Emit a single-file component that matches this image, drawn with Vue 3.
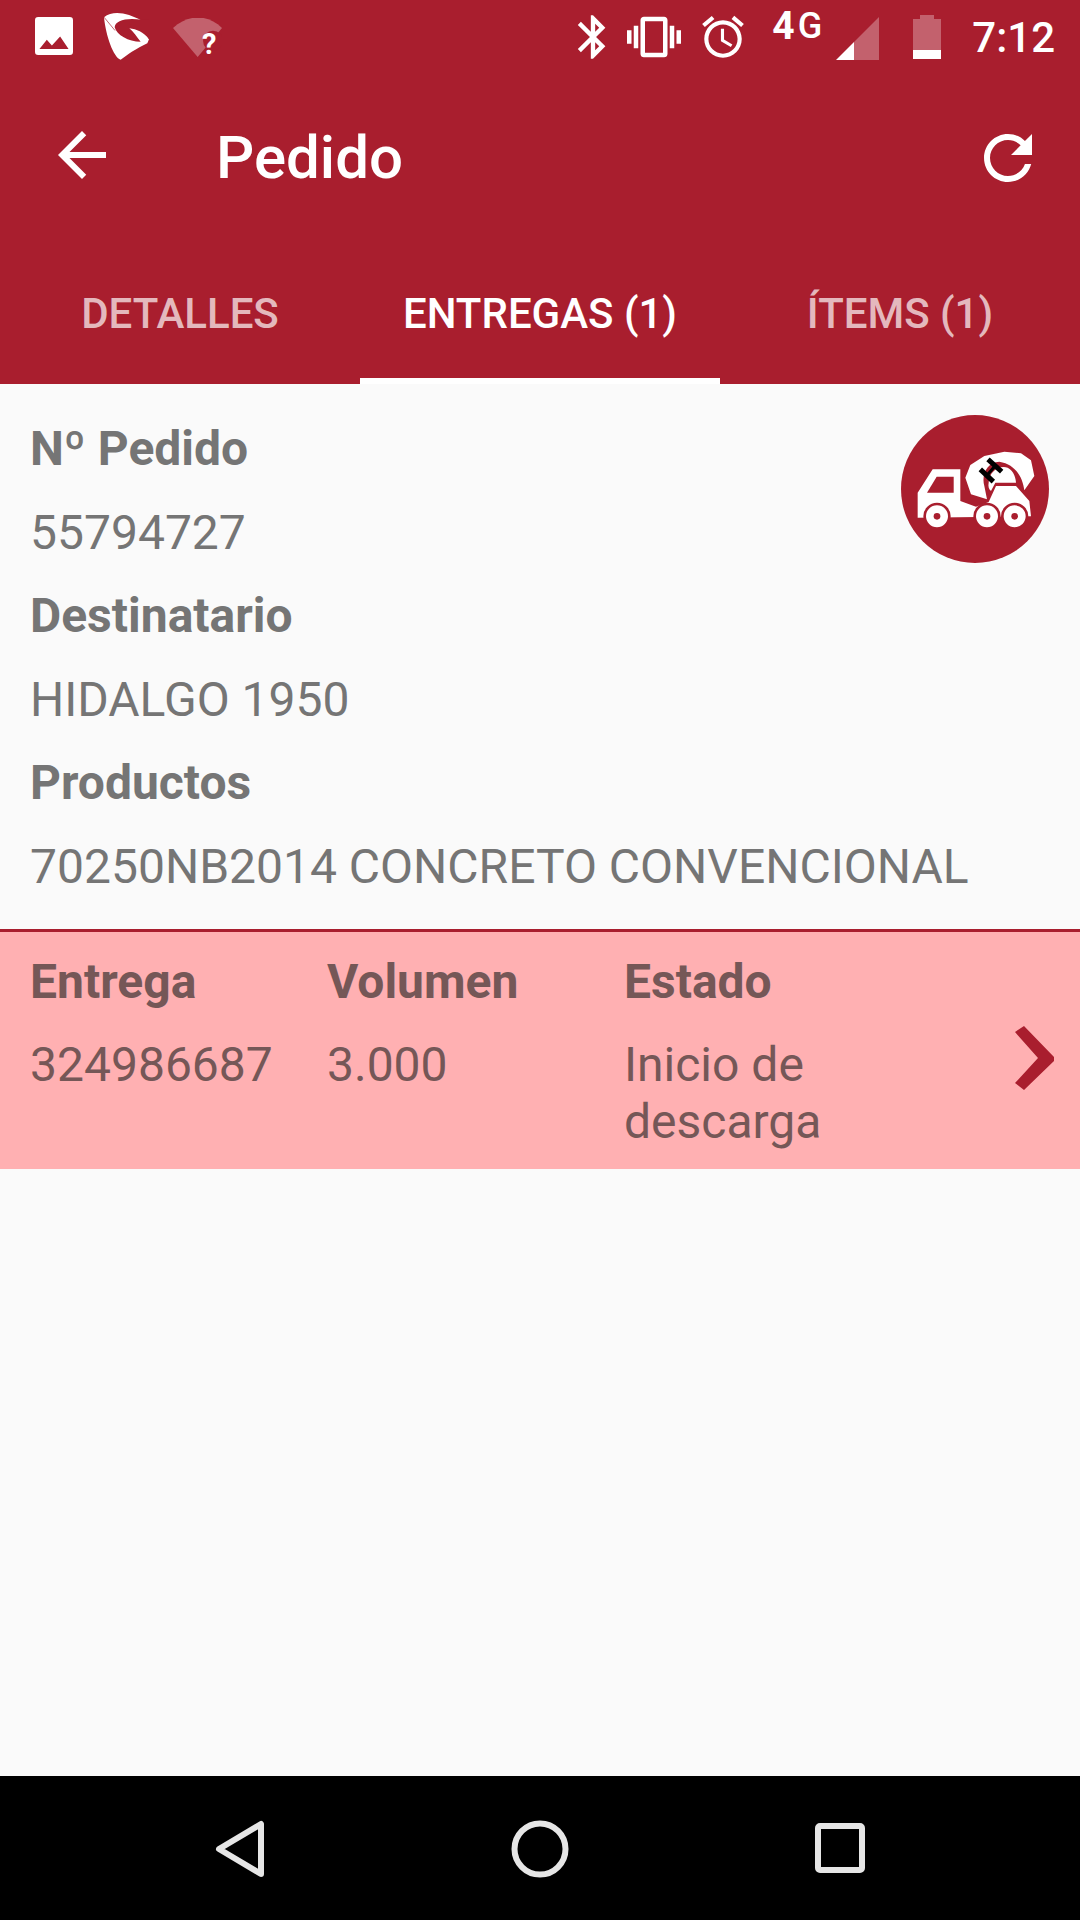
<template>
  <div class="screen">
    <header class="app-header">
      <div class="status-bar">
        <svg class="ic-image" viewBox="3 3 18 18" fill="#fff">
          <path d="M4.500 3h15A1.500 1.500 0 0 1 21 4.500v15a1.500 1.500 0 0 1-1.500 1.500h-15A1.500 1.500 0 0 1 3 19.500v-15A1.500 1.500 0 0 1 4.500 3zM5.100 18.100h13.800l-4-5.900-3.900 4.300-2.400-2.700z" fill-rule="evenodd"/>
        </svg>
        <svg class="ic-logo" viewBox="312 37 135 143">
          <path fill="#fff" d="M312 52C340 30 385 40 424 62L447 118 442 130C410 145 380 165 362 180 340 170 318 110 312 52Z"/>
          <path fill="#a91e2e" d="M426 60C380 52 345 62 344 82 350 105 385 125 422 126 410 110 400 95 388 85 410 88 430 95 447 118L450 60Z"/>
          <path fill="none" stroke="#a91e2e" stroke-width="2" d="M312 52L345 92"/>
        </svg>
        <div class="wifi">
          <svg viewBox="520 50 147 117">
            <path fill="#fff" fill-opacity=".3" d="M520 80C565 38 625 38 667 80L594 167Z"/>
            <circle cx="640" cy="118" r="30" fill="#a91e2e"/>
          </svg>
          <span class="wifi-mark">?</span>
        </div>
        <div class="status-gap"></div>
        <svg class="ic-bt" viewBox="0 0 24 24" fill="#fff">
          <path d="M17.710 7.710L12 2h-1v7.590L6.410 5 5 6.410 10.590 12 5 17.590 6.410 19 11 14.410V22h1l5.710-5.710-4.300-4.290 4.300-4.290zM13 5.830l1.880 1.880L13 9.590V5.830zm1.880 10.460L13 18.170v-3.760l1.880 1.880z"/>
        </svg>
        <svg class="ic-vibrate" viewBox="0 0 24 24" fill="#fff">
          <path d="M0 15h2V9H0v6zm3 2h2V7H3v10zm19-8v6h2V9h-2zm-3 8h2V7h-2v10zM16.500 3h-9C6.670 3 6 3.670 6 4.500v15c0 .83.67 1.500 1.500 1.500h9c.83 0 1.500-.67 1.500-1.500v-15c0-.83-.67-1.500-1.500-1.500zM16 19H8V5h8v14z"/>
        </svg>
        <svg class="ic-alarm" viewBox="0 0 24 24" fill="#fff">
          <path d="M22 5.720l-4.600-3.860-1.290 1.530 4.600 3.860L22 5.720zM7.880 3.390L6.600 1.860 2 5.710l1.290 1.530 4.590-3.850zM12.500 8H11v6l4.750 2.850.75-1.230-4-2.370V8zM12 4c-4.970 0-9 4.030-9 9s4.020 9 9 9c4.970 0 9-4.030 9-9s-4.030-9-9-9zm0 16c-3.870 0-7-3.130-7-7s3.130-7 7-7 7 3.130 7 7-3.130 7-7 7z"/>
        </svg>
        <div class="net"><span class="net-4">4</span><span class="net-g">G</span></div>
        <svg class="ic-signal" viewBox="0 0 43 43">
          <path fill="#fff" fill-opacity=".3" d="M43 0V43H18V25Z"/>
          <path fill="#fff" d="M18 25V43H0Z"/>
        </svg>
        <svg class="ic-battery" viewBox="0 0 28 44">
          <path fill="#fff" fill-opacity=".3" d="M0 4H7V0H21V4H28V35H0Z"/>
          <rect y="35" width="28" height="9" fill="#fff"/>
        </svg>
        <span class="clock">7:12</span>
      </div>

      <div class="toolbar">
        <svg class="ic-back" viewBox="0 0 24 24" fill="#fff">
          <path d="M20 11H7.830l5.590-5.590L12 4l-8 8 8 8 1.410-1.410L7.830 13H20v-2z"/>
        </svg>
        <h1 class="title">Pedido</h1>
        <svg class="ic-refresh" viewBox="0 0 24 24" fill="#fff">
          <path d="M17.650 6.350C16.200 4.900 14.210 4 12 4c-4.420 0-7.990 3.580-7.990 8s3.570 8 7.990 8c3.730 0 6.840-2.550 7.730-6h-2.080c-.82 2.330-3.040 4-5.650 4-3.310 0-6-2.690-6-6s2.690-6 6-6c1.660 0 3.140.69 4.220 1.780L13 11h7V4l-2.350 2.350z"/>
        </svg>
      </div>

      <nav class="tabs">
        <div
          v-for="tab in tabs"
          :key="tab.label"
          class="tab"
          :class="{ 'is-active': tab.active }"
        >
          {{ tab.label }}
        </div>
      </nav>
    </header>

    <main class="content">
      <section class="order">
        <div class="order-fields">
          <template v-for="field in orderFields" :key="field.label">
            <div class="field-label">{{ field.label }}</div>
            <div class="field-value">{{ field.value }}</div>
          </template>
        </div>
        <svg class="truck" viewBox="-45 -78 444 444">
          <circle cx="177" cy="144" r="222" fill="#a91e2e"/>
          <path fill="#fff" d="M148 110L163 72 205 45 265 32 315 37 345 58 355 105 325 148C320 110 300 70 250 62 215 62 195 100 205 135L213 175 165 160Z"/>
          <path fill="#fff" d="M218 125C220 90 250 72 275 80 295 90 300 115 300 125H238L225 150C218 145 216 135 218 125Z"/>
          <path fill="#fff" d="M5 230V155L50 85H133V180L180 197 218 183 240 135H300L340 180 345 226 5 230Z"/>
          <path fill="#a91e2e" d="M33 155L62 107H113V155Z"/>
          <g fill="#fff" stroke="#a91e2e" stroke-width="8">
            <circle cx="63" cy="226" r="37"/>
            <circle cx="213" cy="226" r="37"/>
            <circle cx="296" cy="226" r="37"/>
          </g>
          <g fill="#a91e2e">
            <circle cx="63" cy="226" r="10"/>
            <circle cx="213" cy="226" r="10"/>
            <circle cx="296" cy="226" r="10"/>
          </g>
          <g fill="none" stroke="#000">
            <path d="M193 85L232 122" stroke-width="15"/>
            <path d="M216 55L257 92" stroke-width="15"/>
            <path d="M213 103L237 75" stroke-width="9"/>
          </g>
        </svg>
      </section>

      <section class="delivery">
        <div v-for="col in deliveryCols" :key="col.label" class="delivery-col" :class="col.cls">
          <div class="delivery-label">{{ col.label }}</div>
          <div class="delivery-value">{{ col.value }}</div>
        </div>
        <svg class="chevron" viewBox="0 0 40 64" fill="#a91e2e">
          <path d="M9 0L39 31V35L9 64 0 57 23 32 0 6Z" />
        </svg>
      </section>
    </main>

    <footer class="nav-bar">
      <svg class="nav-back" viewBox="0 0 50 58"><path d="M46 4V54L4 29Z"/></svg>
      <svg class="nav-home" viewBox="0 0 58 58"><circle cx="29" cy="29" r="25.500"/></svg>
      <svg class="nav-recent" viewBox="0 0 50 50"><rect x="3" y="3" width="44" height="44" rx="2"/></svg>
    </footer>
  </div>
</template>

<script setup>
const tabs = [
  { label: 'DETALLES', active: false },
  { label: 'ENTREGAS (1)', active: true },
  { label: 'ÍTEMS (1)', active: false }
]

const orderFields = [
  { label: 'Nº Pedido', value: '55794727' },
  { label: 'Destinatario', value: 'HIDALGO 1950' },
  { label: 'Productos', value: '70250NB2014 CONCRETO CONVENCIONAL' }
]

const deliveryCols = [
  { label: 'Entrega', value: '324986687', cls: 'col-id' },
  { label: 'Volumen', value: '3.000', cls: 'col-volume' },
  { label: 'Estado', value: 'Inicio de descarga', cls: 'col-state' }
]
</script>

<style>
html,
body {
  margin: 0;
  background: #fafafa;
}
</style>

<style scoped>
.screen {
  width: 1080px;
  height: 1920px;
  display: flex;
  flex-direction: column;
  background: #fafafa;
  font-family: Roboto, "Liberation Sans", sans-serif;
  overflow: hidden;
}

svg {
  display: block;
  flex: none;
}

.app-header {
  background: #a91e2e;
  color: #fff;
}

.status-bar {
  height: 75px;
  display: flex;
  align-items: center;
  padding-left: 35px;
}

.ic-image {
  width: 38px;
  height: 38px;
  margin-top: -3px;
}

.ic-logo {
  width: 45px;
  height: 48px;
  margin-left: 31px;
  margin-top: -3px;
}

.wifi {
  position: relative;
  width: 49px;
  height: 39px;
  margin-left: 24px;
  margin-top: -1px;
}

.wifi svg {
  width: 49px;
  height: 39px;
}

.wifi-mark {
  position: absolute;
  left: 29px;
  top: 11px;
  font-size: 29px;
  line-height: 30px;
  font-weight: 700;
}

.status-gap {
  flex: 1;
}

.ic-bt {
  width: 52px;
  height: 52px;
  margin-top: -2px;
}

.ic-vibrate {
  width: 54px;
  height: 54px;
  margin-left: 8px;
  margin-top: -2px;
}

.ic-alarm {
  width: 50px;
  height: 50px;
  margin-left: 17px;
  margin-top: -2px;
}

.net {
  display: flex;
  align-items: flex-start;
  margin-left: 24px;
  margin-top: -23px;
  color: #fff;
  width: 52px;
  line-height: 30px;
}

.net-4 {
  font-size: 39px;
  font-weight: 700;
}

.net-g {
  font-size: 36px;
  font-weight: 500;
  margin-left: 3px;
}

.ic-signal {
  width: 43px;
  height: 43px;
  margin-left: 12px;
  margin-top: 2px;
}

.ic-battery {
  width: 28px;
  height: 44px;
  margin-left: 34px;
  margin-top: -2px;
}

.clock {
  font-size: 42px;
  font-weight: 500;
  margin-left: 31px;
  margin-right: 25px;
}

.toolbar {
  height: 165px;
  display: flex;
  align-items: flex-start;
  padding-left: 46px;
}

.ic-back {
  width: 72px;
  height: 72px;
  margin-top: 44px;
}

.title {
  margin: 46px 0 0 98px;
  font-size: 60px;
  line-height: 74px;
  font-weight: 500;
  flex: 1;
}

.ic-refresh {
  width: 72px;
  height: 72px;
  margin: 47px 36px 0 0;
}

.tabs {
  height: 144px;
  display: grid;
  grid-template-columns: repeat(3, 1fr);
}

.tab {
  display: flex;
  align-items: center;
  justify-content: center;
  font-size: 42px;
  font-weight: 500;
  color: rgba(255, 255, 255, 0.7);
  box-sizing: border-box;
  border-bottom: 6px solid transparent;
  padding-top: 8px;
}

.tab.is-active {
  color: #fff;
  border-bottom-color: #fff;
}

.content {
  flex: 1;
}

.order {
  height: 548px;
  box-sizing: border-box;
  display: flex;
  align-items: flex-start;
  padding: 23px 30px 0;
  border-bottom: 3px solid #a91e2e;
}

.order-fields {
  flex: 1;
  min-width: 0;
}

.field-label,
.field-value {
  font-size: 48px;
  line-height: 83.500px;
  color: #757575;
  white-space: nowrap;
}

.field-label {
  font-weight: 700;
}

.truck {
  width: 148px;
  height: 148px;
  margin: 8px 1px 0 0;
}

.delivery {
  height: 237px;
  box-sizing: border-box;
  background: #ffb0b2;
  display: flex;
  padding: 8px 24px 0 30px;
  position: relative;
}

.delivery-col {
  color: #755757;
  font-size: 48px;
}

.col-id {
  width: 297px;
}

.col-volume {
  width: 297px;
}

.col-state {
  width: 240px;
}

.delivery-label {
  font-weight: 700;
  line-height: 83px;
}

.delivery-value {
  line-height: 57px;
  margin-top: 13px;
}

.chevron {
  position: absolute;
  right: 25px;
  top: 94px;
  width: 40px;
  height: 64px;
}

.nav-bar {
  height: 144px;
  background: #000;
  position: relative;
  display: flex;
  align-items: center;
  justify-content: center;
}

.nav-bar svg {
  position: absolute;
  fill: none;
  stroke: #e6e6e6;
  stroke-width: 6;
  stroke-linejoin: round;
}

.nav-back {
  left: 215px;
  top: 44px;
  width: 50px;
  height: 58px;
}

.nav-home {
  left: 511px;
  top: 44px;
  width: 58px;
  height: 58px;
}

.nav-recent {
  left: 815px;
  top: 47px;
  width: 50px;
  height: 50px;
}
</style>
